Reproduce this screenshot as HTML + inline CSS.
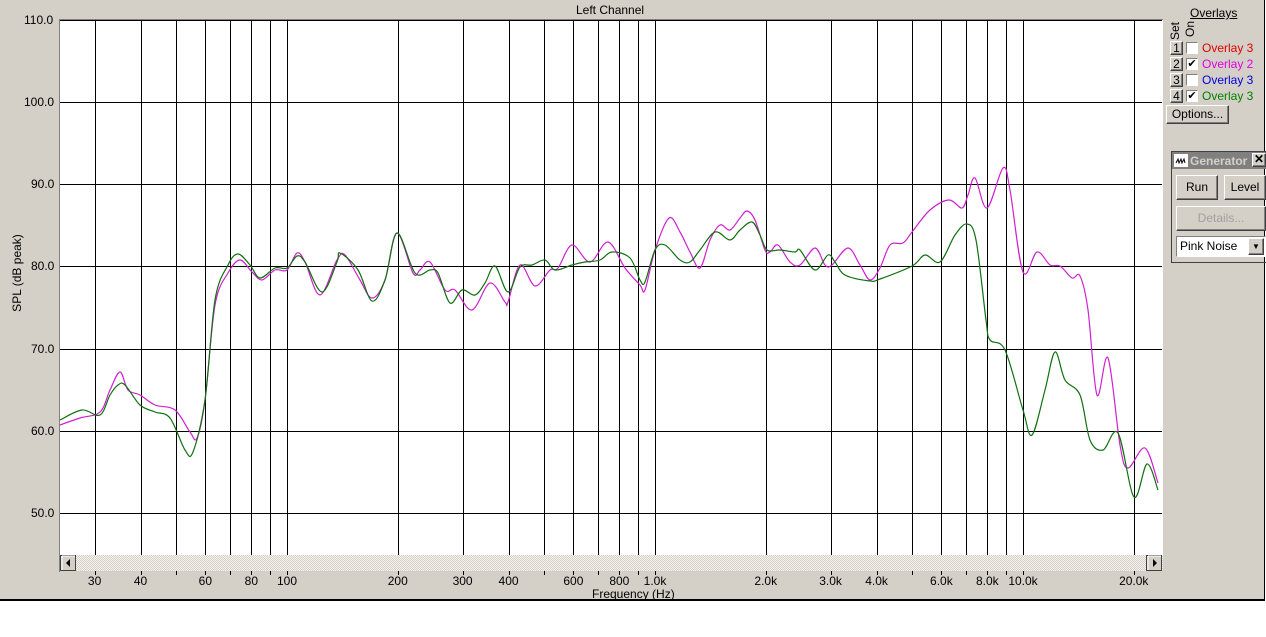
<!DOCTYPE html>
<html><head><meta charset="utf-8"><style>
body{margin:0;width:1266px;height:637px;background:#fff;font-family:"Liberation Sans",Arial,sans-serif;overflow:hidden;position:relative}
.win{position:absolute;left:0;top:0;width:1264px;height:599px;background:#d4d0c8;border-bottom:2px solid #000;border-right:1px solid #000}
.t{position:absolute;font-size:12px;color:#000;white-space:nowrap}
.btn{position:absolute;background:#d4d0c8;border:1px solid;border-color:#fff #404040 #404040 #fff;box-shadow:inset -1px -1px #808080;font-size:12px;text-align:center;box-sizing:border-box}
.cb{position:absolute;width:12px;height:12px;background:#fff;border:1px solid;border-color:#808080 #fff #fff #808080;box-sizing:border-box;font-size:11px;line-height:10px;text-align:center}
</style></head><body>
<div class="win"></div>
<svg style="position:absolute;left:0;top:0" width="1266" height="637">
<defs><pattern id="dots" width="2" height="2" patternUnits="userSpaceOnUse"><rect width="1" height="1" fill="#d4d0c8"/><rect x="1" y="1" width="1" height="1" fill="#d4d0c8"/></pattern></defs>
<rect x="59" y="19" width="1104" height="536" fill="#fff"/>
<line x1="59.5" y1="19" x2="59.5" y2="572" stroke="#808080"/>
<line x1="59" y1="19.5" x2="1163" y2="19.5" stroke="#808080"/>
<g stroke="#000" stroke-width="1" id="grid"></g>
<path id="mag" fill="none" stroke="#d020d0" stroke-width="1.2"/>
<path id="grn" fill="none" stroke="#107010" stroke-width="1.2"/>
<rect x="60" y="555" width="1103" height="16" fill="#f4f3f0"/>
<rect x="60" y="555" width="1103" height="16" fill="url(#dots)"/>
<rect x="60.5" y="555.5" width="15" height="15" fill="#d4d0c8" stroke="#404040"/>
<path d="M62 556h13M62 556v14" stroke="#fff"/>
<path d="M66 563l4-4v8z" fill="#000"/>
<rect x="1146.5" y="555.5" width="15" height="15" fill="#d4d0c8" stroke="#404040"/>
<path d="M1148 556h13M1148 556v14" stroke="#fff"/>
<path d="M1157 563l-4-4v8z" fill="#000"/>
<g id="ticks" stroke="#000"></g>
</svg>
<div class="t" style="left:576px;top:3px">Left Channel</div>
<div class="t" style="left:592px;top:587px">Frequency (Hz)</div>
<div class="t" style="left:-28px;top:266px;transform:rotate(-90deg);width:90px;text-align:center">SPL (dB peak)</div>
<div class="t" style="left:24px;top:13px">110.0</div>
<div class="t" style="left:24px;top:95px">100.0</div>
<div class="t" style="left:31px;top:177px">90.0</div>
<div class="t" style="left:31px;top:259px">80.0</div>
<div class="t" style="left:31px;top:342px">70.0</div>
<div class="t" style="left:31px;top:424px">60.0</div>
<div class="t" style="left:31px;top:506px">50.0</div>
<div id="xl"></div>
<div class="t" style="left:1190px;top:6px;text-decoration:underline">Overlays</div>
<div class="t" style="left:1166px;top:24px;transform:rotate(-90deg);font-size:12px">Set</div>
<div class="t" style="left:1182px;top:22px;transform:rotate(-90deg);font-size:12px">On</div>
<div class="btn" style="left:1170px;top:41px;width:13px;height:14px;line-height:12px">1</div>
<div class="btn" style="left:1170px;top:57px;width:13px;height:14px;line-height:12px">2</div>
<div class="btn" style="left:1170px;top:73px;width:13px;height:14px;line-height:12px">3</div>
<div class="btn" style="left:1170px;top:89px;width:13px;height:14px;line-height:12px">4</div>
<div class="cb" style="left:1186px;top:42px"></div>
<div class="cb" style="left:1186px;top:58px">✔</div>
<div class="cb" style="left:1186px;top:74px"></div>
<div class="cb" style="left:1186px;top:90px">✔</div>
<div class="t" style="left:1202px;top:41px;color:#e00000">Overlay 3</div>
<div class="t" style="left:1202px;top:57px;color:#e000e0">Overlay 2</div>
<div class="t" style="left:1202px;top:73px;color:#0000e0">Overlay 3</div>
<div class="t" style="left:1202px;top:89px;color:#008000">Overlay 3</div>
<div class="btn" style="left:1166px;top:105px;width:63px;height:19px;line-height:17px">Options...</div>
<div style="position:absolute;left:1171px;top:151px;width:95px;height:112px;border:1px solid #404040;border-right:none;box-sizing:border-box"></div>
<div style="position:absolute;left:1172px;top:152px;width:94px;height:17px;background:#808080"></div>
<svg style="position:absolute;left:1174px;top:154px" width="14" height="13"><rect width="14" height="13" fill="#fff"/><path d="M2 9l2-4 1 4 2-4 1 4 2-4 1 4" stroke="#000" fill="none"/></svg>
<div class="t" style="left:1190px;top:154px;color:#d4d0c8;font-weight:bold">Generator</div>
<div class="btn" style="left:1252px;top:153px;width:14px;height:14px;line-height:11px;font-weight:bold">✕</div>
<div class="btn" style="left:1176px;top:175px;width:42px;height:25px;line-height:23px">Run</div>
<div class="btn" style="left:1224px;top:175px;width:42px;height:25px;line-height:23px">Level</div>
<div class="btn" style="left:1176px;top:206px;width:90px;height:25px;line-height:23px;color:#a0a0a0">Details...</div>
<div style="position:absolute;left:1176px;top:236px;width:90px;height:21px;background:#fff;border:1px solid;border-color:#808080 #fff #fff #808080;box-sizing:border-box;font-size:12px;line-height:19px;padding-left:3px">Pink Noise</div>
<div class="btn" style="left:1248px;top:238px;width:16px;height:17px;font-size:8px;line-height:15px">▼</div>
<script>
var g=document.getElementById('grid'),tk=document.getElementById('ticks'),xl=document.getElementById('xl');
function X(f){return 287+368*Math.log10(f/100);}
var fs=[30,40,50,60,70,80,90,100,200,300,400,500,600,700,800,900,1000,2000,3000,4000,5000,6000,7000,8000,9000,10000,20000];
var s='',t='';
fs.forEach(function(f){var x=Math.round(X(f))+0.5;s+='<line x1="'+x+'" y1="20" x2="'+x+'" y2="555"/>';t+='<line x1="'+x+'" y1="571" x2="'+x+'" y2="575"/>';});
[20,102,184,266,349,431,513].forEach(function(y){s+='<line x1="60" y1="'+(y+.5)+'" x2="1162" y2="'+(y+.5)+'"/>';});
g.innerHTML=s;tk.innerHTML=t;
var L={30:'30',40:'40',60:'60',80:'80',100:'100',200:'200',300:'300',400:'400',600:'600',800:'800',1000:'1.0k',2000:'2.0k',3000:'3.0k',4000:'4.0k',6000:'6.0k',8000:'8.0k',10000:'10.0k',20000:'20.0k'};
var h='';for(var f in L){h+='<div class="t" style="left:'+(X(+f)-40)+'px;width:80px;text-align:center;top:574px">'+L[f]+'</div>';}
xl.innerHTML=h;
function smooth(str){var p=str.trim().split(/\s+/).map(function(a){return a.split(',').map(Number);});
var d='M'+p[0][0]+' '+p[0][1];
for(var i=0;i<p.length-1;i++){var p0=p[i-1]||p[i],p1=p[i],p2=p[i+1],p3=p[i+2]||p2;
var c1x=p1[0]+(p2[0]-p0[0])/6,c1y=p1[1]+(p2[1]-p0[1])/6,c2x=p2[0]-(p3[0]-p1[0])/6,c2y=p2[1]-(p3[1]-p1[1])/6;
d+='C'+c1x.toFixed(1)+' '+c1y.toFixed(1)+' '+c2x.toFixed(1)+' '+c2y.toFixed(1)+' '+p2[0]+' '+p2[1];}
return d;}
document.getElementById('mag').setAttribute('d',smooth("60,425 80,418 100,412 110,390 120,372 128,390 140,395 155,405 175,410 190,432 197,438 205,400 215,305 228,273 240,260 252,272 262,280 275,270 287,270 297,253 305,262 320,295 337,260 345,255 360,280 372,298 385,280 397,233 413,273 420,270 430,262 445,290 455,290 472,310 490,283 505,302 508,302 520,265 535,286 550,270 558,268 572,245 590,262 608,242 625,268 640,285 645,290 655,250 669,218 680,232 690,252 700,268 710,240 720,225 730,230 740,218 747,211 755,220 765,250 770,252 778,245 790,262 800,265 815,248 825,265 832,265 848,248 860,265 870,280 880,268 890,245 903,243 912,232 930,210 949,200 962,208 968,195 975,178 987,208 1003,168 1010,190 1023,272 1037,252 1050,265 1060,266 1072,278 1080,276 1088,310 1097,395 1108,358 1120,445 1128,468 1145,448 1158,483"));
document.getElementById('grn').setAttribute('d',smooth("60,420 82,410 100,415 110,395 118,385 125,385 140,405 155,412 170,418 185,450 193,452 205,400 215,300 228,265 238,254 250,265 260,278 275,268 287,268 297,256 305,262 322,292 337,262 340,253 358,270 372,301 385,280 397,233 415,273 430,270 438,273 450,303 462,290 475,295 485,283 495,266 508,292 520,267 532,265 545,260 555,270 572,265 585,262 600,260 612,252 630,258 640,280 645,282 655,250 665,245 680,260 690,262 700,250 715,232 730,240 740,230 752,222 760,235 767,250 780,250 795,252 800,250 815,270 828,255 835,262 845,275 870,281 880,279 912,266 925,255 940,262 955,235 967,224 976,240 986,320 990,340 1005,350 1023,410 1032,435 1045,390 1055,352 1065,380 1080,395 1090,440 1103,450 1118,433 1134,497 1147,464 1158,490"));
</script>
</body></html>
